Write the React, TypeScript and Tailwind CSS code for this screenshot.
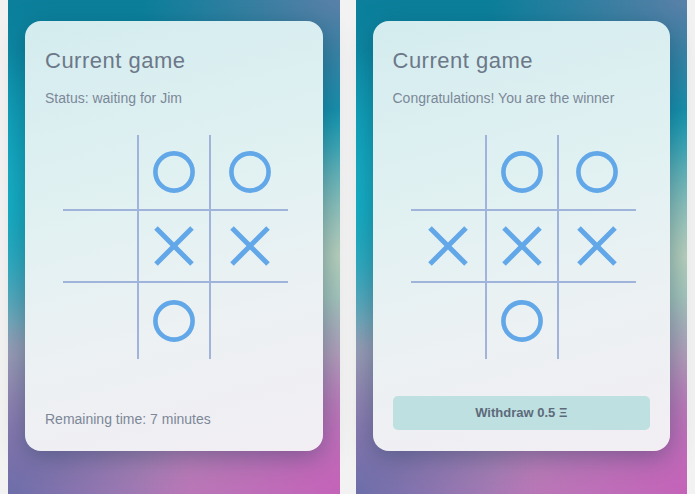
import React from "react";

type Cell = "" | "X" | "O";

const O = () => (
  <svg width="42" height="42" viewBox="0 0 42 42">
    <circle cx="21" cy="21" r="18.6" fill="none" stroke="#62a7e8" strokeWidth="4.6" />
  </svg>
);

const X = () => (
  <svg width="42" height="42" viewBox="0 0 42 42">
    <path d="M3 3 L39 39 M39 3 L3 39" fill="none" stroke="#62a7e8" strokeWidth="5" strokeLinecap="butt" />
  </svg>
);

const colW = ["w-[76px]", "w-[72px]", "w-[77px]"];
const rowH = ["h-[76px]", "h-[72px]", "h-[76px]"];

function Board({ cells }: { cells: Cell[] }) {
  return (
    <div className="ml-[18px] mt-[30px] flex w-[225px] flex-col">
      {[0, 1, 2].map((r) => (
        <div key={r} className="flex">
          {[0, 1, 2].map((c) => {
            const v = cells[r * 3 + c];
            const br = c < 2 ? "border-r-2" : "";
            const bb = r < 2 ? "border-b-2" : "";
            return (
              <div
                key={c}
                className={`${colW[c]} ${rowH[r]} ${br} ${bb} flex items-center justify-center border-[#a0b4db]`}
              >
                {v === "O" ? <O /> : v === "X" ? <X /> : null}
              </div>
            );
          })}
        </div>
      ))}
    </div>
  );
}

function Panel({ status, cells, footer }: { status: string; cells: Cell[]; footer: React.ReactNode }) {
  return (
    <div className="h-[494px] min-w-0 flex-1 bg-[radial-gradient(ellipse_60%_40%_at_100%_100%,#c463b9_0%,rgba(196,99,185,0)_100%),radial-gradient(ellipse_55%_35%_at_0%_100%,#6c6ea9_0%,rgba(108,110,169,0)_100%),radial-gradient(ellipse_45%_30%_at_100%_52%,#b8cfbc_0%,rgba(184,207,188,0)_100%),radial-gradient(ellipse_60%_25%_at_100%_0%,#5a80a8_0%,rgba(90,128,168,0)_100%),radial-gradient(ellipse_40%_30%_at_0%_40%,#14adc4_0%,rgba(20,173,196,0)_100%),linear-gradient(180deg,#0b7f9b_0%,#1198b3_30%,#4ea8ba_52%,#a3a6b8_72%,#b38ab8_88%,#b57cb6_100%)] px-[17px] pt-[21px]">
      <div className="flex h-[430px] flex-col rounded-[16px] bg-[linear-gradient(165deg,#d4ecef_0%,#e1f1f2_40%,#ecf1f3_68%,#f2eef4_100%)] px-[20px] pt-[29px] shadow-[0_6px_26px_rgba(0,45,70,0.35)] [font-family:'Liberation_Sans',Arial,sans-serif]">
        <div className="text-[22px] leading-[22px] tracking-[0.5px] text-[#6c7888]">Current game</div>
        <div className="mt-[19px] text-[14px] leading-[14px] text-[#7c8898]">{status}</div>
        <Board cells={cells} />
        <div className="mt-auto">{footer}</div>
      </div>
    </div>
  );
}

export default function App() {
  return (
    <div className="flex h-[494px] w-[695px] gap-4 bg-[#f2f2f2] px-2">
      <Panel
        status="Status: waiting for Jim"
        cells={["", "O", "O", "", "X", "X", "", "O", ""]}
        footer={
          <div className="mb-[25px] text-[14px] leading-[14px] text-[#7c8797]">Remaining time: 7 minutes</div>
        }
      />
      <Panel
        status="Congratulations! You are the winner"
        cells={["", "O", "O", "X", "X", "X", "", "O", ""]}
        footer={
          <div className="mb-[21px] flex h-[34px] items-center justify-center rounded-[5px] bg-[#bfe0e0] text-[13px] font-bold text-[#5c6a7b]">
            Withdraw 0.5 Ξ
          </div>
        }
      />
    </div>
  );
}
